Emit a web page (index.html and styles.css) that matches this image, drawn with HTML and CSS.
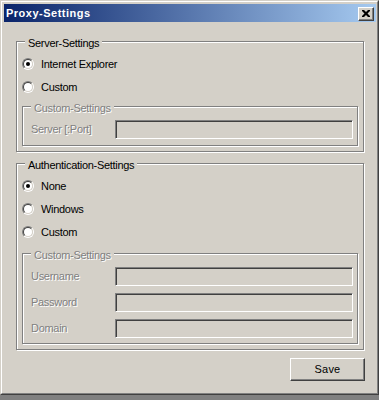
FILE: index.html
```html
<!DOCTYPE html>
<html>
<head>
<meta charset="utf-8">
<link rel="stylesheet" href="styles.css">
</head>
<body>
<div class="window">
  <div class="frame">
    <div class="titlebar">
      <span class="title">Proxy-Settings</span>
      <span class="close"><svg width="8" height="7" viewBox="0 0 8 7"><path d="M0 0h2l2 2 2-2h2v1l-2.5 2.5 2.5 2.5v1h-2l-2-2-2 2h-2v-1l2.5-2.5-2.5-2.5z" fill="#000"/></svg></span>
    </div>
    <div class="content">
      <div class="group g-server">
        <span class="legend">Server-Settings</span>
        <div class="radios">
          <div class="radio-row"><span class="radio checked"></span><span>Internet Explorer</span></div>
          <div class="radio-row"><span class="radio"></span><span>Custom</span></div>
        </div>
        <div class="group inner disabled i-server">
          <span class="legend">Custom-Settings</span>
          <div class="fields">
            <span class="label">Server [:Port]</span><span class="input"></span>
          </div>
        </div>
      </div>
      <div class="group g-auth">
        <span class="legend">Authentication-Settings</span>
        <div class="radios">
          <div class="radio-row"><span class="radio checked"></span><span>None</span></div>
          <div class="radio-row"><span class="radio"></span><span>Windows</span></div>
          <div class="radio-row"><span class="radio"></span><span>Custom</span></div>
        </div>
        <div class="group inner disabled i-auth">
          <span class="legend">Custom-Settings</span>
          <div class="fields">
            <span class="label">Username</span><span class="input"></span>
            <span class="label">Password</span><span class="input"></span>
            <span class="label">Domain</span><span class="input"></span>
          </div>
        </div>
      </div>
      <div class="actions"><span class="btn">Save</span></div>
    </div>
  </div>
</div>
</body>
</html>
```

FILE: styles.css
```css
* { box-sizing: border-box; }
html, body { margin: 0; padding: 0; }
body {
  width: 379px;
  height: 400px;
  overflow: hidden;
  background: #808080;
  font-family: "Liberation Sans", Arial, sans-serif;
  font-size: 11px;
  line-height: 13px;
  letter-spacing: -0.3px;
  color: #000;
}
.window {
  width: 379px;
  height: 395px;
  background: #d4d0c8;
  border-top: 1px solid #d4d0c8;
  border-left: 1px solid #d4d0c8;
  border-right: 1px solid #404040;
  border-bottom: 1px solid #404040;
}
.frame {
  height: 100%;
  border-top: 1px solid #fff;
  border-left: 1px solid #fff;
  border-right: 1px solid #808080;
  border-bottom: 1px solid #808080;
  padding: 2px 1px 2px 2px;
  display: flex;
  flex-direction: column;
}
.titlebar {
  height: 18px;
  flex: none;
  background: linear-gradient(to right, #0a246a, #a6caf0);
  display: flex;
  align-items: center;
  padding: 0 2px 0 2px;
}
.title {
  color: #fff;
  font-weight: bold;
  letter-spacing: 0.5px;
  flex: 1;
}
.close {
  width: 16px;
  height: 14px;
  background: #d4d0c8;
  border-top: 1px solid #fff;
  border-left: 1px solid #fff;
  border-right: 1px solid #404040;
  border-bottom: 1px solid #404040;
  box-shadow: inset -1px -1px 0 #808080;
  display: flex;
  align-items: center;
  justify-content: center;
  padding: 0 1px 1px 0;
  margin-top: 1px;
}
.close svg { display: block; }
.content {
  flex: 1;
  display: flex;
  flex-direction: column;
  padding: 19px 12px 0 12px;
}
.group {
  position: relative;
  border: 1px solid #808080;
  box-shadow: inset 1px 1px 0 #fff, 1px 1px 0 #fff;
  padding: 11px 5px 5px 5px;
}
.g-auth { margin-top: 11px; }
.legend {
  position: absolute;
  top: -5px;
  left: 8px;
  padding: 0 3px;
  background: #d4d0c8;
  white-space: nowrap;
}
.radios {
  display: flex;
  flex-direction: column;
  gap: 1px;
}
.radio-row {
  height: 22px;
  display: flex;
  align-items: center;
  gap: 7px;
}
.radio {
  position: relative;
  width: 12px;
  height: 12px;
  border-radius: 50%;
  border: 1px solid;
  border-color: #808080 #fff #fff #808080;
  flex: none;
}
.radio::before {
  content: "";
  position: absolute;
  inset: 0;
  border-radius: 50%;
  border: 1px solid;
  border-color: #404040 #d4d0c8 #d4d0c8 #404040;
  background: #fff;
}
.radio.checked::after {
  content: "";
  position: absolute;
  left: 3px;
  top: 3px;
  width: 4px;
  height: 4px;
  border-radius: 50%;
  background: #000;
}
.inner {
  padding: 13px 4px 6px 8px;
}
.i-server { margin-top: 8px; }
.i-auth { margin-top: 10px; padding-bottom: 5px; }
.disabled { color: #808080; }
.disabled .legend, .disabled .label { text-shadow: 1px 1px 0 #fff; }
.fields {
  display: grid;
  grid-template-columns: 84px 1fr;
  row-gap: 7px;
  align-items: center;
}
.input {
  height: 19px;
  background: #d4d0c8;
  border-top: 1px solid #808080;
  border-left: 1px solid #808080;
  border-right: 1px solid #fff;
  border-bottom: 1px solid #fff;
  box-shadow: inset 1px 1px 0 #404040, inset -1px -1px 0 #d4d0c8;
}
.actions {
  display: flex;
  justify-content: flex-end;
  margin-top: 8px;
  margin-right: -1px;
}
.btn {
  width: 75px;
  height: 23px;
  background: #d4d0c8;
  border-top: 1px solid #fff;
  border-left: 1px solid #fff;
  border-right: 1px solid #404040;
  border-bottom: 1px solid #404040;
  box-shadow: inset -1px -1px 0 #808080;
  display: flex;
  align-items: center;
  justify-content: center;
  letter-spacing: 0.2px;
}
```
